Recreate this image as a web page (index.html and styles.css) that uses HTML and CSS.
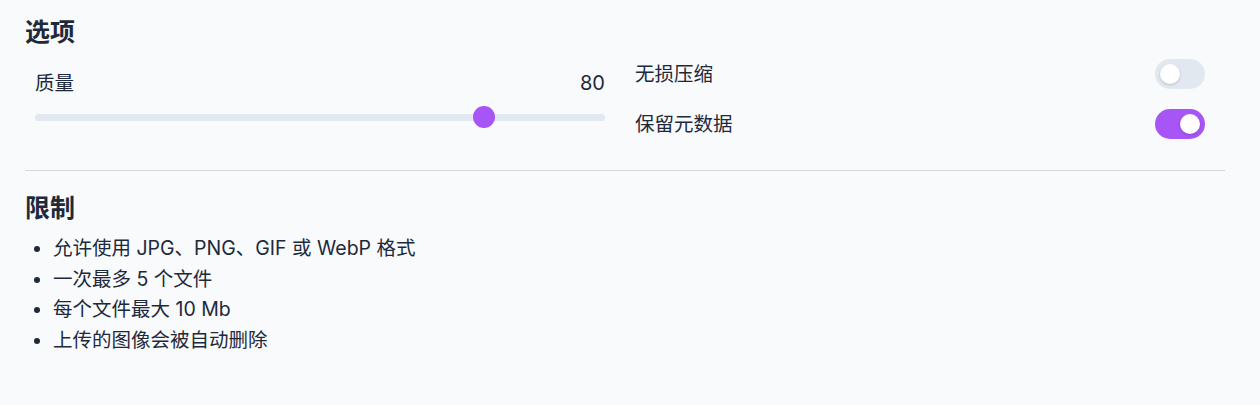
FILE: index.html
```html
<!DOCTYPE html>
<html lang="zh-CN">
<head>
<meta charset="utf-8">
<title>选项</title>
<link rel="stylesheet" href="styles.css">
</head>
<body>
<div class="page">
  <section class="options">
    <h2 class="title">选项</h2>
    <div class="grid">
      <div class="quality">
        <div class="quality-row">
          <span>质量</span>
          <span class="value">80</span>
        </div>
        <div class="slider">
          <div class="track"></div>
          <div class="thumb" style="left: calc((100% - 22px) * 0.8)"></div>
        </div>
      </div>
      <div class="switches">
        <div class="switch-row">
          <span>无损压缩</span>
          <span class="toggle"><span class="knob"></span></span>
        </div>
        <div class="switch-row">
          <span>保留元数据</span>
          <span class="toggle on"><span class="knob"></span></span>
        </div>
      </div>
    </div>
  </section>
  <hr class="divider">
  <section class="limits">
    <h2 class="title">限制</h2>
    <ul class="list">
      <li>允许使用 JPG、PNG、GIF 或 WebP 格式</li>
      <li>一次最多 5 个文件</li>
      <li>每个文件最大 10 Mb</li>
      <li>上传的图像会被自动删除</li>
    </ul>
  </section>
</div>
</body>
</html>
```

FILE: styles.css
```css
html, body {
  margin: 0;
  background: #f8fafc;
}
body {
  font-family: "Inter", "Noto Sans CJK SC", sans-serif;
  color: #1e293b;
  font-size: 19.5px;
}
.page {
  padding: 14px 35px 0 25px;
}
.title {
  margin: 0;
  font-size: 25px;
  line-height: 36px;
  font-weight: 700;
  color: #1e293b;
}
.grid {
  display: grid;
  grid-template-columns: 1fr 1fr;
  column-gap: 20px;
  margin-top: 9px;
}
.quality {
  padding: 9px 10px 0 10px;
}
.quality-row {
  display: flex;
  justify-content: space-between;
  line-height: 30px;
}
.value {
  font-size: 20px;
}
.slider {
  position: relative;
  height: 22px;
  margin-top: 8px;
}
.track {
  position: absolute;
  left: 0;
  right: 0;
  top: 7.5px;
  height: 7px;
  border-radius: 4px;
  background: #e2e8f0;
}
.thumb {
  position: absolute;
  top: 0;
  width: 22px;
  height: 22px;
  border-radius: 50%;
  background: #a855f7;
}
.switches {
  display: flex;
  flex-direction: column;
  gap: 20px;
  padding-right: 20px;
}
.switch-row {
  display: flex;
  justify-content: space-between;
  align-items: center;
  height: 30px;
  line-height: 30px;
}
.toggle {
  position: relative;
  width: 50px;
  height: 30px;
  border-radius: 15px;
  background: #e2e8f0;
  box-sizing: border-box;
  padding: 5px;
  display: flex;
}
.toggle.on {
  background: #a855f7;
  justify-content: flex-end;
}
.knob {
  width: 20px;
  height: 20px;
  border-radius: 50%;
  background: #ffffff;
  box-shadow: 0 1px 3px rgba(0, 0, 0, 0.18);
}
.divider {
  border: 0;
  border-top: 1px solid #d4d8de;
  margin: 31px 0 0 0;
}
.limits {
  padding-top: 19px;
}
.list {
  margin: 7px 0 0;
  padding-left: 28px;
  line-height: 30.6px;
  font-size: 19.5px;
}
.list li {
  height: 30.6px;
}
```
